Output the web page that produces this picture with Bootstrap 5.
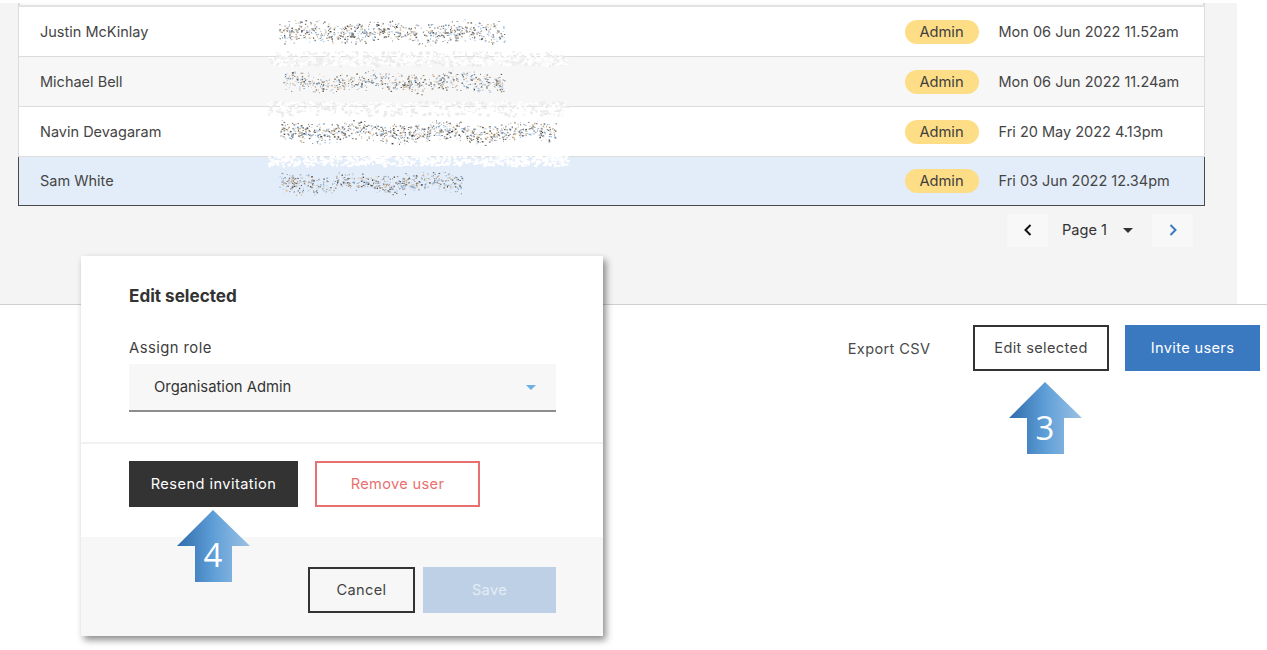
<!DOCTYPE html>
<html lang="en">
<head>
<meta charset="utf-8">
<title>Users</title>
<link href="https://cdn.jsdelivr.net/npm/bootstrap@5.3.0/dist/css/bootstrap.min.css" rel="stylesheet">
<style>
html,body{height:650px;overflow:hidden;background:#fff}
body{font-family:Inter,"Liberation Sans",sans-serif;color:#3b3b3b;font-size:15px;position:relative}
.stage{width:1267px;height:650px;position:relative;padding-top:3px}
.panel-top{background:#f4f4f4;width:1237px;height:301px;padding:0 32px 0 18px}
.head-edge{height:4px;background:#fafafa;border-bottom:2px solid #e2e2e2;border-left:2px solid #dcdcdc;border-right:2px solid #dcdcdc}
.users{width:1187px;table-layout:fixed;margin:0;--bs-table-bg:transparent;border-collapse:collapse;font-size:14.5px;color:#454545}
.users td{height:50px;padding:1px 0 0 21px;vertical-align:middle;border:0;border-bottom:1px solid #dcdcdc;background:#fff;white-space:nowrap}
.users tr.first td{height:49px;padding-top:2px}
.users td:first-child{border-left:1px solid #dcdcdc}
.users td:last-child{border-right:1px solid #dcdcdc;padding-left:19px}
.users tr.alt td{background:#f7f7f7}
.users tr.sel td{background:#e3edf9;border-bottom:1px solid #4a4a4a;height:49px;padding-top:0}
.users tr.sel td:first-child{border-left:1px solid #4a4a4a}
.users tr.sel td:last-child{border-right:1px solid #4a4a4a}
.col-name{width:248px}.col-mail{width:620px}.col-role{width:93px}
.role-pill{display:inline-block;width:74px;height:24px;line-height:24px;border-radius:12px;background:#fedd87;color:#3d3d3d;text-align:center;font-size:14.7px;margin-left:-3px}
.pager{height:33px;margin-top:8px;padding-right:12px;color:#333;font-size:14.6px}
.pg-btn{width:41px;height:33px;background:#f8f8f8;border:0;padding:0}
.pg-label{width:104px;padding-left:14px;padding-top:1px}
.pg-caret{width:0;height:0;border-left:5.5px solid transparent;border-right:5.5px solid transparent;border-top:5px solid #333;margin-left:auto;margin-right:19px}
.bottom-bar{border-top:1px solid #cfcfcf;padding:20px 7px 0 0;gap:16px}
.act{height:46px;border-radius:0;font-size:14.6px;letter-spacing:.35px;padding:1px 0 0;display:flex;align-items:center;justify-content:center}
.act-link{color:#4a4a4a;width:82px;margin-right:27px;white-space:nowrap;padding-top:3px}
.act-edit{width:136px;border:2px solid #333;color:#444;background:#fff;padding-top:2px}
.act-inv{width:135px;background:#3a78c0;color:#fff;border:0;padding-top:2px}
.dlg{position:absolute;left:81px;top:256px;width:522px;height:380px;background:#fff;box-shadow:3px 4px 7px rgba(0,0,0,.45);display:flex;flex-direction:column}
.dlg-top{padding:30px 47px 0 48px;height:188px;border-bottom:2px solid #f1f1f1}
.dlg-title{font-size:17.1px;font-weight:700;color:#333;margin:0;line-height:20px}
.dlg-label{font-size:14.8px;color:#3d3d3d;margin:33px 0 6px;line-height:19px;letter-spacing:.45px;display:block}
.dlg-select{height:48px;background:#f7f7f7;border-bottom:2px solid #8d8d8d;padding:1px 25px 0;font-size:14.8px;color:#333}
.dlg-caret{width:0;height:0;border-left:5.5px solid transparent;border-right:5.5px solid transparent;border-top:5.5px solid #6cb0e4;margin-left:auto;margin-right:-5px}
.dlg-mid{padding:17px 48px 0;height:93px;gap:17px}
.act-dark{width:169px;background:#333;color:#fff;border:0;letter-spacing:.45px;padding-top:2px}
.act-rem{width:165px;background:#fff;color:#e87070;border:2px solid #e87070;padding-top:2px}
.dlg-foot{flex:1;background:#f7f7f7;padding:30px 47px 0 0;gap:8px}
.act-cancel{width:107px;border:2px solid #333;color:#444;background:#f7f7f7}
.act-save{width:133px;background:#bdd0e6;color:#e4ecf5;border:0}
.pointer{position:absolute;width:74px;height:72px;overflow:visible}
.pointer text{font-family:"Open Sans","Noto Sans",sans-serif;font-size:33px;font-weight:500;fill:#fff;text-anchor:middle}
.p3{left:1008px;top:382px}.p4{left:176px;top:510px}
.smudge{position:absolute;left:260px;top:8px;width:320px;height:215px;pointer-events:none}
</style>
</head>
<body>
<div class="stage">
  <div class="panel-top">
    <div class="head-edge"></div>
    <table class="table users">
      <colgroup><col class="col-name"><col class="col-mail"><col class="col-role"><col></colgroup>
      <tbody>
        <tr class="first"><td>Justin McKinlay</td><td></td><td><span class="role-pill">Admin</span></td><td>Mon 06 Jun 2022 11.52am</td></tr>
        <tr class="alt"><td>Michael Bell</td><td></td><td><span class="role-pill">Admin</span></td><td>Mon 06 Jun 2022 11.24am</td></tr>
        <tr><td>Navin Devagaram</td><td></td><td><span class="role-pill">Admin</span></td><td>Fri 20 May 2022 4.13pm</td></tr>
        <tr class="sel"><td>Sam White</td><td></td><td><span class="role-pill">Admin</span></td><td>Fri 03 Jun 2022 12.34pm</td></tr>
      </tbody>
    </table>
    <div class="pager d-flex justify-content-end align-items-center">
      <button class="pg-btn d-flex align-items-center justify-content-center" aria-label="Previous page"><svg width="10" height="14" viewBox="0 0 10 14"><path d="M7.5 2 2.5 7l5 5" fill="none" stroke="#111" stroke-width="2"/></svg></button>
      <div class="pg-label d-flex align-items-center"><span>Page 1</span><span class="pg-caret"></span></div>
      <button class="pg-btn d-flex align-items-center justify-content-center" aria-label="Next page"><svg width="10" height="14" viewBox="0 0 10 14"><path d="M2.5 2l5 5-5 5" fill="none" stroke="#3a78c0" stroke-width="2"/></svg></button>
    </div>
  </div>
  <div class="bottom-bar d-flex justify-content-end">
    <div class="act act-link">Export CSV</div>
    <button class="btn act act-edit">Edit selected</button>
    <button class="btn act act-inv">Invite users</button>
  </div>

  <svg class="smudge" id="smudge" viewBox="260 8 320 215" aria-hidden="true"></svg>

  <div class="dlg">
    <div class="dlg-top">
      <h2 class="dlg-title">Edit selected</h2>
      <label class="dlg-label">Assign role</label>
      <div class="dlg-select d-flex align-items-center"><span>Organisation Admin</span><span class="dlg-caret"></span></div>
    </div>
    <div class="dlg-mid d-flex align-items-start">
      <button class="btn act act-dark">Resend invitation</button>
      <button class="btn act act-rem">Remove user</button>
    </div>
    <div class="dlg-foot d-flex justify-content-end align-items-start">
      <button class="btn act act-cancel">Cancel</button>
      <button class="btn act act-save">Save</button>
    </div>
  </div>

  <svg class="pointer p3" viewBox="0 0 74 72">
    <defs><linearGradient id="gr3" x1="0" x2="1" y1="0" y2="0"><stop offset="0" stop-color="#2f6cab"/><stop offset=".5" stop-color="#5f9fd8"/><stop offset="1" stop-color="#9cc1e4"/></linearGradient></defs>
    <path d="M37 0 74 36H56V72H19V36H1Z" fill="url(#gr3)"/><text x="37" y="58">3</text>
  </svg>
  <svg class="pointer p4" viewBox="0 0 74 72">
    <path d="M37 0 74 36H56V72H19V36H1Z" fill="url(#gr3)"/><text x="37" y="57">4</text>
  </svg>
</div>
<script src="https://cdn.jsdelivr.net/npm/bootstrap@5.3.0/dist/js/bootstrap.bundle.min.js"></script>
<script>
(function(){
  var s=12345;function r(){s=(s*16807)%2147483647;return s/2147483647;}
  var pal=['#6a6a6a','#a08a6c','#6f97c2','#dcb788','#454545','#a9c4e0','#857a70','#c3d0de'];
  var out='';
  var bands=[[58,1],[108,1],[158,0]];
  bands.forEach(function(b){
    for(var i=0;i<800;i++){
      var x=267+r()*300,y=b[0]-7+r()*14;
      var f=(b[1]&&r()<.4)?'#ebebeb':'#ffffff';
      out+='<rect x="'+x.toFixed(1)+'" y="'+y.toFixed(1)+'" width="'+(1.5+r()*2.2).toFixed(1)+'" height="'+(1+r()*1.8).toFixed(1)+'" fill="'+f+'"/>';
    }
  });
  var lines=[[278,505,32,12,760],[283,505,82,11,620],[280,556,132,11,950],[279,462,183,11,560]];
  lines.forEach(function(l,k){
    var w=l[1]-l[0];
    for(var i=0;i<l[4];i++){
      var x=l[0]+r()*w,j=(r()+r()-1);
      var y=l[2]+j*l[3]+Math.sin(x/13+k)*2;
      var c=pal[Math.floor(r()*pal.length)];
      out+='<rect x="'+x.toFixed(1)+'" y="'+y.toFixed(1)+'" width="'+(.7+r()*1.1).toFixed(1)+'" height="'+(.6+r()*.9).toFixed(1)+'" fill="'+c+'"/>';
    }
  });
  document.getElementById('smudge').innerHTML=out;
})();
</script>
</body>
</html>
